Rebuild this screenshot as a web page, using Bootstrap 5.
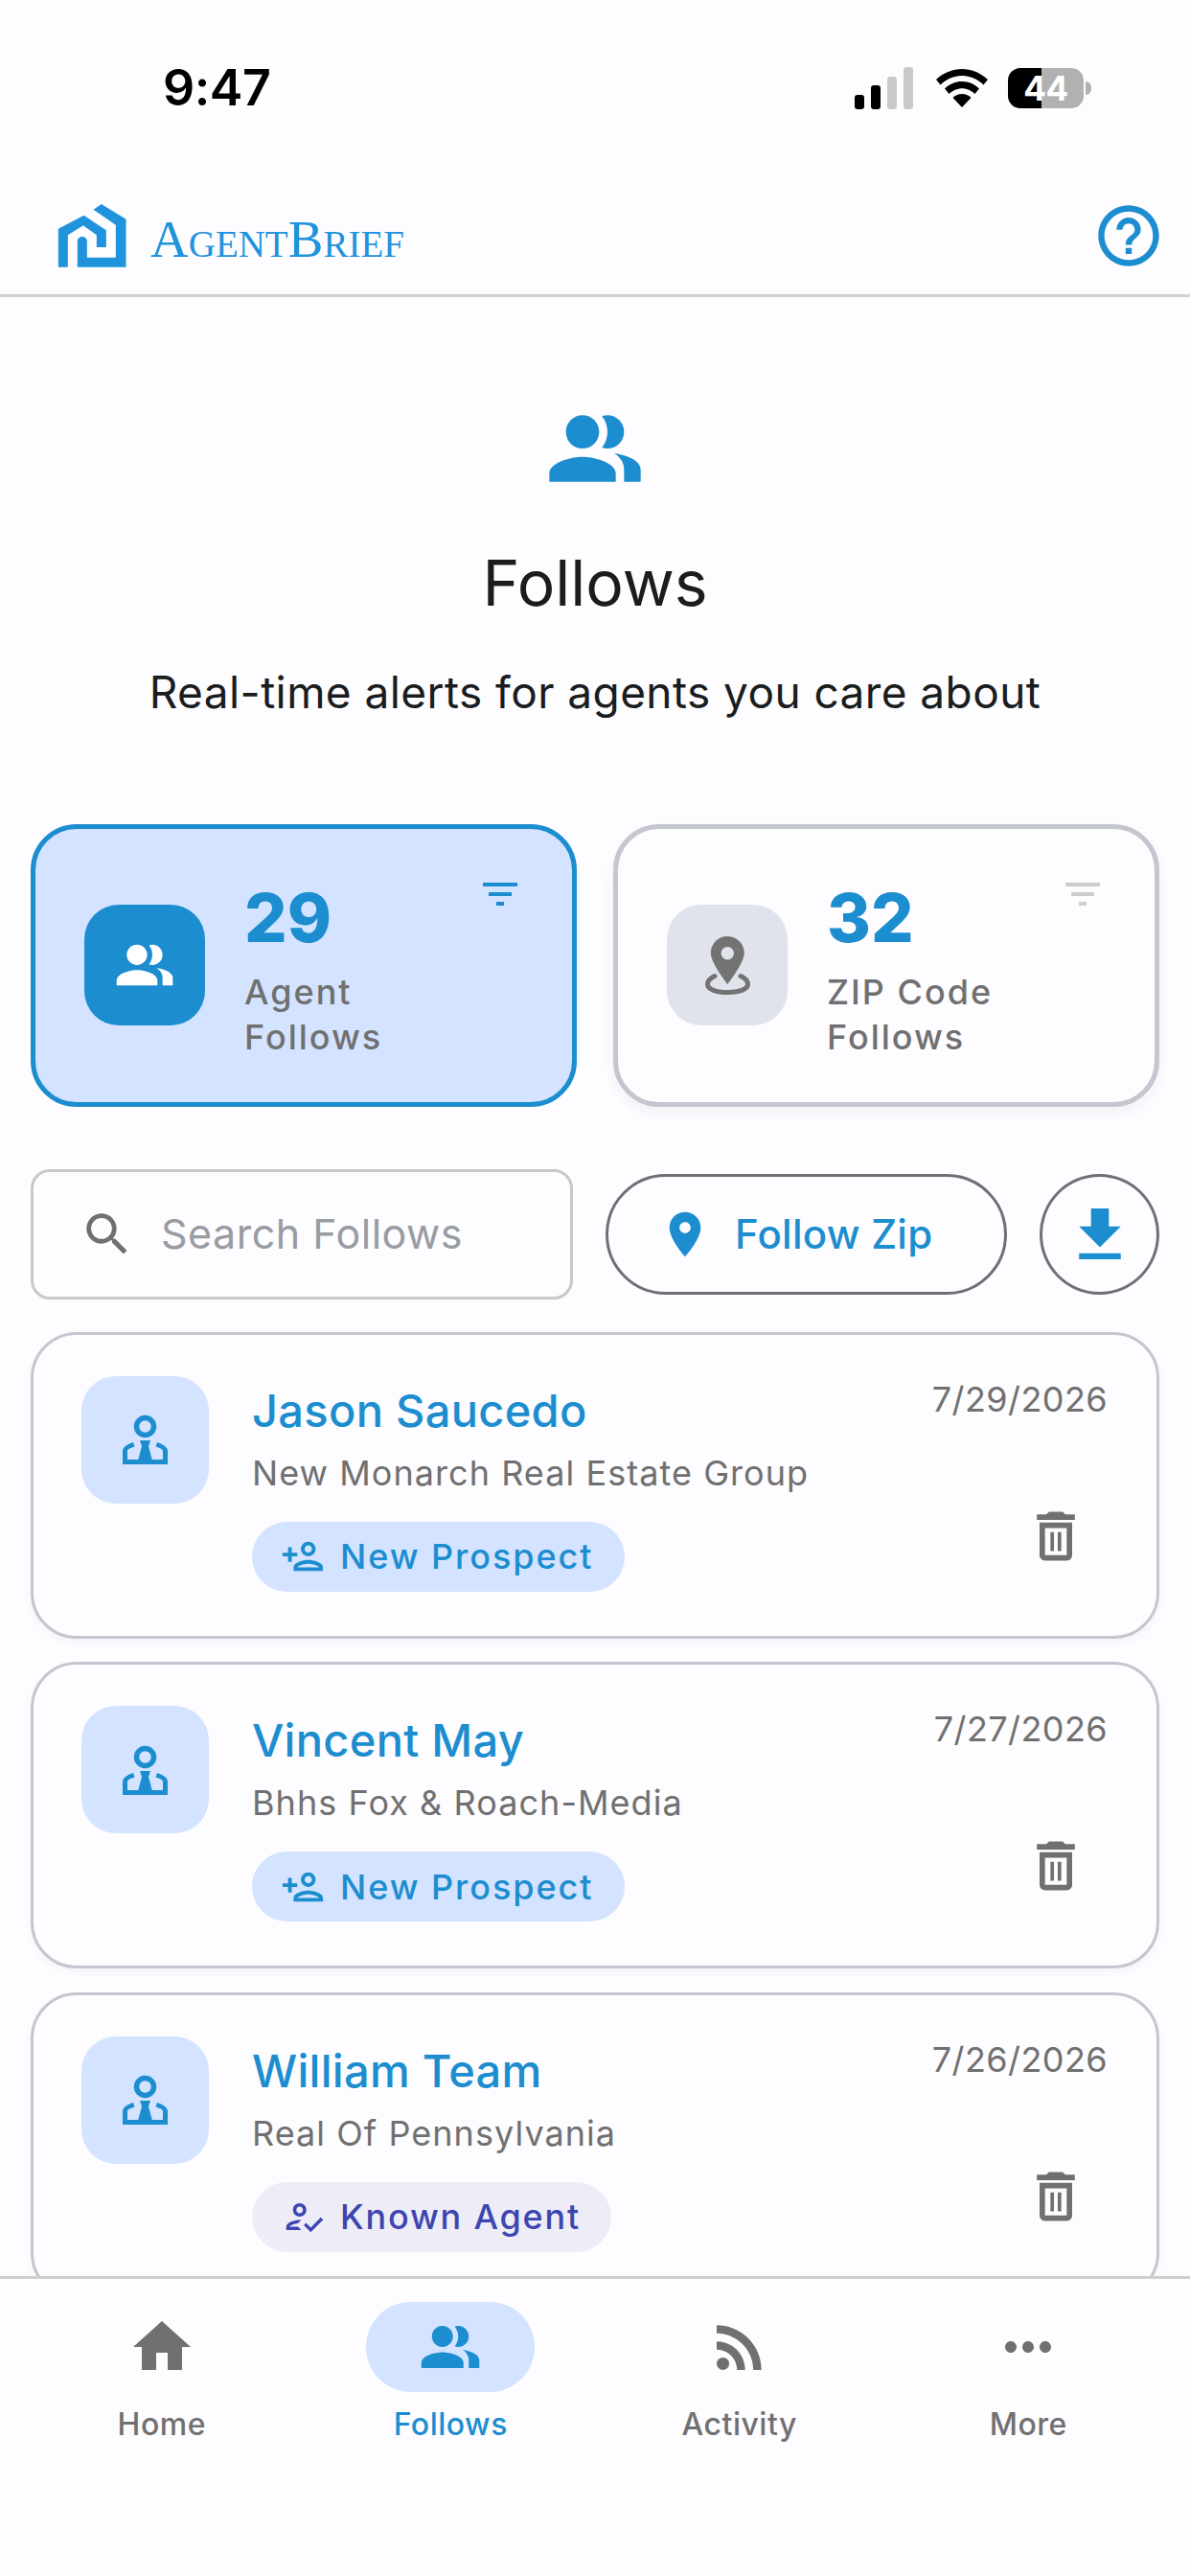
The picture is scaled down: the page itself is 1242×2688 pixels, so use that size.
<!DOCTYPE html>
<html lang="en">
<head>
<meta charset="utf-8">
<title>AgentBrief Follows</title>
<link href="https://cdn.jsdelivr.net/npm/bootstrap@5.3.0/dist/css/bootstrap.min.css" rel="stylesheet">
<style>
:root{--ab-blue:#1c8dcf;--ab-soft:#d4e3ff;--ab-line:#c4c6d0;--ab-grey:#707070;}
html,body{height:2688px;overflow:hidden;}
body{background:#fdfcff;font-family:Inter,"Noto Sans",sans-serif;color:#1a1c1e;}
.app-shell{height:2688px;width:1242px;overflow:hidden;}
.status-row{height:182px;padding:4px 103px 0 170px;}
.clock{font-size:52px;font-weight:600;line-height:1;color:#000;letter-spacing:-.5px;}
.status-icons{gap:24px;}
.batt-wrap{width:87px;height:42px;margin-left:-3px;}
.batt-num{font-size:35px;font-weight:700;color:#fff;line-height:42px;width:79px;border-radius:13px;background:linear-gradient(90deg,#000 0,#000 35px,#b1b1b1 35px);text-align:center;letter-spacing:-.5px;}
.batt-cap{width:6px;height:14px;background:#b1b1b1;border-radius:0 6px 6px 0;margin-left:2px;}
.top-bar{height:131px;padding:6px 26px 0 60px;border-bottom:3px solid #d3d3d3;}
.brand-name{font-family:"Liberation Serif",serif;font-variant:small-caps;font-size:55px;line-height:1;color:#1f93dc;margin:6px 0 0 25px;}
.main-pane{min-height:0;overflow:hidden;padding:0 32px;}
.hero-block{padding-top:106px;}
.hero-title{font-size:66px;font-weight:400;line-height:80px;margin:48px 0 0;color:#1a1c1e;}
.hero-sub{font-size:46px;font-weight:400;line-height:56px;margin:46px 0 0;color:#1a1c1e;letter-spacing:.42px;}
.stat-row{gap:38px;margin-top:110px;}
.stat-card{width:570px;height:295px;border:5px solid var(--ab-line);border-radius:48px;background:#fdfcff;box-shadow:0 6px 14px rgba(30,40,70,.05);padding:0 0 0 51px;}
.stat-card.is-on{border-color:var(--ab-blue);background:var(--ab-soft);box-shadow:none;}
.stat-tile{width:126px;height:126px;border-radius:36px;flex:none;background:#e1e3ec;}
.is-on .stat-tile{background:var(--ab-blue);}
.stat-text{margin-left:41px;padding-top:12px;}
.stat-num{font-size:70px;font-weight:800;line-height:76px;color:var(--ab-blue);}
.stat-label{font-size:36px;font-weight:500;line-height:47px;color:var(--ab-grey);letter-spacing:2px;margin-top:16px;}
.stat-filter{position:absolute;top:44px;right:51px;}
.tool-row{gap:34px;margin-top:65px;}
.find-box{width:566px;height:136px;border:3px solid #c9c9c9;border-radius:20px;padding-left:48px;background:#fdfcff;}
.find-box input{font-size:43px;padding:0;margin-left:27px;background:transparent;color:#333;letter-spacing:.5px;}
.find-box input::placeholder{color:#989ca2;opacity:1;}
.zip-btn{width:419px;height:126px;border:3px solid #6c7077;color:var(--ab-blue);font-size:42px;font-weight:500;padding:0 0 0 52px;background:transparent;letter-spacing:.25px;}
.dl-btn{width:125px;height:126px;border:3px solid #6c7077;padding:0;background:transparent;}
.follow-list{gap:24.5px;margin-top:34px;}
.follow-card{height:320px;flex:none;border:3px solid var(--ab-line);border-radius:48px;background:#fdfcff;padding:43px 51px 0 50px;box-shadow:0 4px 10px rgba(30,40,70,.04);}
.person-tile{width:133px;height:133px;border-radius:36px;background:var(--ab-soft);flex:none;}
.person-body{margin-left:45px;}
.person-name{font-size:47px;font-weight:500;line-height:72px;color:var(--ab-blue);letter-spacing:.3px;}
.person-org{font-size:36px;font-weight:400;line-height:50px;color:var(--ab-grey);letter-spacing:1.05px;margin-top:4px;}
.tag-pill{height:73px;margin-top:26px;padding:0 32px 0 30px;gap:16px;font-size:36px;font-weight:500;letter-spacing:1.95px;border-radius:37px;background:var(--ab-soft);color:var(--ab-blue);}
.tag-pill.tag-known{background:#eeedf7;color:#3d46b0;padding-left:34px;gap:16px;letter-spacing:1.8px;}
.person-side{margin-left:auto;height:100%;}
.person-date{font-size:36px;line-height:50px;color:var(--ab-grey);letter-spacing:.4px;text-align:right;margin-top:-1px;}
.trash-ico{margin:84px 20px 0 auto;display:block;}
.tab-bar{height:313px;flex:none;border-top:3px solid #cfcfcf;padding:24px 18px 0;background:#fdfcff;}
.tab-item{width:25%;color:var(--ab-grey);font-size:32px;font-weight:500;line-height:40px;text-decoration:none;letter-spacing:.5px;}
.tab-item.is-on{color:var(--ab-blue);}
.tab-ico{width:176px;height:94px;border-radius:47px;margin-bottom:14px;}
.is-on .tab-ico{background:var(--ab-soft);}
</style>
</head>
<body>
<svg class="d-none" xmlns="http://www.w3.org/2000/svg">
  <symbol id="i-people" viewBox="0 0 24 24"><path d="M16.67 13.13C18.04 14.06 19 15.32 19 17v3h4v-3c0-2.18-3.57-3.47-6.33-3.87z"/><path d="M15 12c2.21 0 4-1.79 4-4s-1.79-4-4-4c-.47 0-.91.1-1.33.24C14.5 5.27 15 6.58 15 8s-.5 2.73-1.33 3.76c.42.14.86.24 1.33.24z"/><path d="M9 12c2.21 0 4-1.79 4-4s-1.79-4-4-4-4 1.79-4 4 1.79 4 4 4zm0 2c-2.67 0-8 1.34-8 4v2h16v-2c0-2.66-5.33-4-8-4z"/></symbol>
  <symbol id="i-filter" viewBox="0 0 24 24"><path d="M10 18h4v-2h-4v2zM3 6v2h18V6H3zm3 7h12v-2H6v2z"/></symbol>
  <symbol id="i-tie" viewBox="0 0 47 52"><circle cx="23.5" cy="12.5" r="9" fill="none" stroke="currentColor" stroke-width="5.5"/><path d="M0 52V38c0-4 5-7 11-9l1.5 4.500c-4 1.500-7.500 2.500-7.500 4.500v9h37v-9c0-2-3.500-3-7.500-4.500L36 29c6 2 11 5 11 9v14z"/><path d="M18 27h11l-2 6 4 15H16l4-15z"/></symbol>
  <symbol id="i-trash" viewBox="0 0 24 24"><path d="M6 19c0 1.100.9 2 2 2h8c1.100 0 2-.9 2-2V7H6v12zM8 9h8v10H8V9zm7.500-5l-1-1h-5l-1 1H5v2h14V4z"/><path d="M10 10.500h1.300V17.500H10zM12.700 10.500H14V17.500h-1.300z"/></symbol>
  <symbol id="i-add" viewBox="0 0 24 24"><path d="M15 12c2.210 0 4-1.790 4-4s-1.790-4-4-4-4 1.790-4 4 1.790 4 4 4zm0-6c1.100 0 2 .9 2 2s-.9 2-2 2-2-.9-2-2 .9-2 2-2zm0 8c-2.670 0-8 1.340-8 4v2h16v-2c0-2.660-5.330-4-8-4zm-6 4c.22-.72 3.310-2 6-2 2.700 0 5.800 1.290 6 2H9zm-3-3v-3h3v-2H6V7H4v3H1v2h3v3h2z"/></symbol>
  <symbol id="i-known" viewBox="0 0 24 24"><path d="M9 4C6.790 4 5 5.790 5 8s1.790 4 4 4 4-1.790 4-4-1.790-4-4-4zm0 6c-1.100 0-2-.9-2-2s.9-2 2-2 2 .9 2 2-.9 2-2 2zM3 18c.2-.63 2.570-1.680 4.960-1.940L10 14.060C9.610 14.020 9.320 14 9 14c-2.670 0-8 1.340-8 4v2h9l-2-2H3zm12.600.5l-2.750-2.800-1.400 1.410 4.150 4.190L23 13.850l-1.400-1.410z"/></symbol>
</svg>
<div class="app-shell d-flex flex-column">
  <div class="status-row d-flex align-items-center justify-content-between flex-none">
    <div class="clock">9:47</div>
    <div class="status-icons d-flex align-items-center">
      <svg width="61" height="44" viewBox="0 0 61 44"><rect x="0" y="29" width="10" height="15" rx="3" fill="#000"/><rect x="17" y="19" width="10" height="25" rx="3" fill="#000"/><rect x="34" y="10" width="10" height="34" rx="3" fill="#c9c9c9"/><rect x="51" y="0" width="10" height="44" rx="3" fill="#c9c9c9"/></svg>
      <svg width="54" height="40" viewBox="0 0 54 40"><path d="M27 0c10 0 19.500 4 27 11l-4.500 5.500C43 10.500 35.500 7 27 7S11 10.500 4.500 16.500L0 11C7.500 4 17 0 27 0z"/><path d="M27 13c6.500 0 13 2.500 18 7.500L40.500 26c-3.500-3.500-8.500-5.800-13.500-5.800S17 22.500 13.500 26L9 20.500C14 15.500 20.500 13 27 13z"/><path d="M27 26c3.500 0 7 1.300 9.500 4L27 40l-9.500-10c2.500-2.700 6-4 9.500-4z"/></svg>
      <div class="batt-wrap d-flex align-items-center"><div class="batt-num">44</div><div class="batt-cap"></div></div>
    </div>
  </div>
  <header class="top-bar d-flex align-items-center justify-content-between flex-none">
    <div class="d-flex align-items-center">
      <svg width="72" height="66" viewBox="33 43 215 198" fill="#1f93dc"><path d="M145 60L170 43 247 90V240H95V160C95 150 102 145 110 145S125 150 125 160V210H215V108z"/><path d="M35 120L115 78 185 125V178H155V140L113 110 65 140V240H35z"/></svg>
      <span class="brand-name">AgentBrief</span>
    </div>
    <svg width="76" height="76" viewBox="0 0 24 24" fill="#1c8dcf"><path d="M11 18h2v-2h-2v2zm1-16C6.480 2 2 6.480 2 12s4.480 10 10 10 10-4.480 10-10S17.520 2 12 2zm0 18c-4.410 0-8-3.590-8-8s3.590-8 8-8 8 3.590 8 8-3.590 8-8 8zm0-14c-2.210 0-4 1.790-4 4h2c0-1.100.9-2 2-2s2 .9 2 2c0 2-3 1.750-3 5h2c0-2.250 3-2.500 3-5 0-2.210-1.790-4-4-4z"/></svg>
  </header>
  <main class="main-pane flex-grow-1 d-flex flex-column">
    <section class="hero-block text-center flex-none">
      <svg class="d-block mx-auto" width="104" height="104" fill="#1c8dcf"><use href="#i-people"/></svg>
      <h1 class="hero-title">Follows</h1>
      <p class="hero-sub">Real-time alerts for agents you care about</p>
    </section>
    <section class="stat-row d-flex flex-none">
      <div class="stat-card is-on card flex-row align-items-center position-relative">
        <div class="stat-tile d-flex align-items-center justify-content-center"><svg width="64" height="64" fill="#fff"><use href="#i-people"/></svg></div>
        <div class="stat-text"><div class="stat-num">29</div><div class="stat-label">Agent<br>Follows</div></div>
        <svg class="stat-filter" width="48" height="48" fill="#1c8dcf"><use href="#i-filter"/></svg>
      </div>
      <div class="stat-card card flex-row align-items-center position-relative">
        <div class="stat-tile d-flex align-items-center justify-content-center">
          <svg width="47" height="61" viewBox="0 0 47 61" fill="#737373"><path d="M23.300 0C13.500 0 5.800 7.800 5.800 17.500 5.800 28 23.300 50 23.300 50S40.800 28 40.800 17.500C40.800 7.800 33 0 23.300 0zm0 24.500a6.700 6.700 0 1 1 0-13.400 6.700 6.700 0 0 1 0 13.400z"/><path d="M10 41.500C5.500 43.500 2.500 46.500 2.500 50c0 5.500 9.500 8.500 21 8.500s21-3 21-8.500c0-3.500-3-6.500-7.500-8.500" fill="none" stroke="#737373" stroke-width="5" stroke-linecap="round"/></svg>
        </div>
        <div class="stat-text"><div class="stat-num">32</div><div class="stat-label">ZIP Code<br>Follows</div></div>
        <svg class="stat-filter" width="48" height="48" fill="#cdcdcd"><use href="#i-filter"/></svg>
      </div>
    </section>
    <section class="tool-row d-flex align-items-center flex-none">
      <div class="find-box d-flex align-items-center">
        <svg class="flex-shrink-0" width="58" height="58" viewBox="0 0 24 24" fill="#707070"><path d="M15.500 14h-.79l-.28-.27C15.410 12.590 16 11.110 16 9.500 16 5.910 13.090 3 9.500 3S3 5.910 3 9.500 5.910 16 9.500 16c1.610 0 3.090-.59 4.230-1.570l.27.28v.79l5 4.990L20.490 19l-4.990-5zm-6 0C7.010 14 5 11.990 5 9.500S7.010 5 9.500 5 14 7.010 14 9.500 11.990 14 9.500 14z"/></svg>
        <input class="form-control border-0 shadow-none" type="text" placeholder="Search Follows" aria-label="Search Follows">
      </div>
      <button class="zip-btn btn rounded-pill d-flex align-items-center" type="button">
        <svg class="flex-shrink-0" width="56" height="56" viewBox="0 0 24 24" fill="#1c8dcf"><path d="M12 2C8.130 2 5 5.130 5 9c0 5.250 7 13 7 13s7-7.750 7-13c0-3.870-3.130-7-7-7zm0 9.500c-1.380 0-2.500-1.120-2.500-2.500s1.120-2.500 2.500-2.500 2.500 1.120 2.500 2.500-1.120 2.500-2.500 2.500z"/></svg>
        <span class="ms-4">Follow Zip</span>
      </button>
      <button class="dl-btn btn rounded-circle d-flex align-items-center justify-content-center" type="button" aria-label="Download">
        <svg width="50" height="59" viewBox="4 2 16 19" fill="#1c8dcf"><path d="M19 9h-4V3H9v6H5l7 7 7-7zM5 18v2h14v-2H5z"/></svg>
      </button>
    </section>
    <section class="follow-list d-flex flex-column flex-none">
      <article class="follow-card card flex-row">
        <div class="person-tile d-flex align-items-center justify-content-center"><svg width="47" height="52" fill="#1c8dcf" color="#1c8dcf"><use href="#i-tie"/></svg></div>
        <div class="person-body">
          <div class="person-name">Jason Saucedo</div>
          <div class="person-org">New Monarch Real Estate Group</div>
          <div class="tag-pill d-inline-flex align-items-center"><svg width="46" height="46" fill="#1c8dcf"><use href="#i-add"/></svg>New Prospect</div>
        </div>
        <div class="person-side">
          <div class="person-date">7/29/2026</div>
          <svg class="trash-ico" width="68" height="68" fill="#707070"><use href="#i-trash"/></svg>
        </div>
      </article>
      <article class="follow-card card flex-row">
        <div class="person-tile d-flex align-items-center justify-content-center"><svg width="47" height="52" fill="#1c8dcf" color="#1c8dcf"><use href="#i-tie"/></svg></div>
        <div class="person-body">
          <div class="person-name">Vincent May</div>
          <div class="person-org">Bhhs Fox &amp; Roach-Media</div>
          <div class="tag-pill d-inline-flex align-items-center"><svg width="46" height="46" fill="#1c8dcf"><use href="#i-add"/></svg>New Prospect</div>
        </div>
        <div class="person-side">
          <div class="person-date">7/27/2026</div>
          <svg class="trash-ico" width="68" height="68" fill="#707070"><use href="#i-trash"/></svg>
        </div>
      </article>
      <article class="follow-card card flex-row">
        <div class="person-tile d-flex align-items-center justify-content-center"><svg width="47" height="52" fill="#1c8dcf" color="#1c8dcf"><use href="#i-tie"/></svg></div>
        <div class="person-body">
          <div class="person-name">William Team</div>
          <div class="person-org">Real Of Pennsylvania</div>
          <div class="tag-pill tag-known d-inline-flex align-items-center"><svg width="42" height="42" fill="#3d46b0"><use href="#i-known"/></svg>Known Agent</div>
        </div>
        <div class="person-side">
          <div class="person-date">7/26/2026</div>
          <svg class="trash-ico" width="68" height="68" fill="#707070"><use href="#i-trash"/></svg>
        </div>
      </article>
    </section>
  </main>
  <nav class="tab-bar d-flex">
    <a class="tab-item d-flex flex-column align-items-center" href="#"><span class="tab-ico d-flex align-items-center justify-content-center"><svg width="72" height="72" viewBox="0 0 24 24" fill="#707070"><path d="M10 20v-6h4v6h5v-8h3L12 3 2 12h3v8z"/></svg></span>Home</a>
    <a class="tab-item is-on d-flex flex-column align-items-center" href="#"><span class="tab-ico d-flex align-items-center justify-content-center"><svg width="66" height="66" fill="#1c8dcf"><use href="#i-people"/></svg></span>Follows</a>
    <a class="tab-item d-flex flex-column align-items-center" href="#"><span class="tab-ico d-flex align-items-center justify-content-center"><svg width="72" height="72" viewBox="0 0 24 24" fill="#707070"><circle cx="6.180" cy="17.820" r="2.180"/><path d="M4 4.440v2.830c7.030 0 12.730 5.700 12.730 12.730h2.830c0-8.590-6.970-15.560-15.560-15.560zm0 5.660v2.830c3.900 0 7.070 3.170 7.070 7.070h2.830c0-5.470-4.430-9.900-9.900-9.900z"/></svg></span>Activity</a>
    <a class="tab-item d-flex flex-column align-items-center" href="#"><span class="tab-ico d-flex align-items-center justify-content-center"><svg width="72" height="72" viewBox="0 0 24 24" fill="#707070"><path d="M6 10c-1.100 0-2 .9-2 2s.9 2 2 2 2-.9 2-2-.9-2-2-2zm12 0c-1.100 0-2 .9-2 2s.9 2 2 2 2-.9 2-2-.9-2-2-2zm-6 0c-1.100 0-2 .9-2 2s.9 2 2 2 2-.9 2-2-.9-2-2-2z"/></svg></span>More</a>
  </nav>
</div>
<script src="https://cdn.jsdelivr.net/npm/bootstrap@5.3.0/dist/js/bootstrap.bundle.min.js"></script>
</body>
</html>
